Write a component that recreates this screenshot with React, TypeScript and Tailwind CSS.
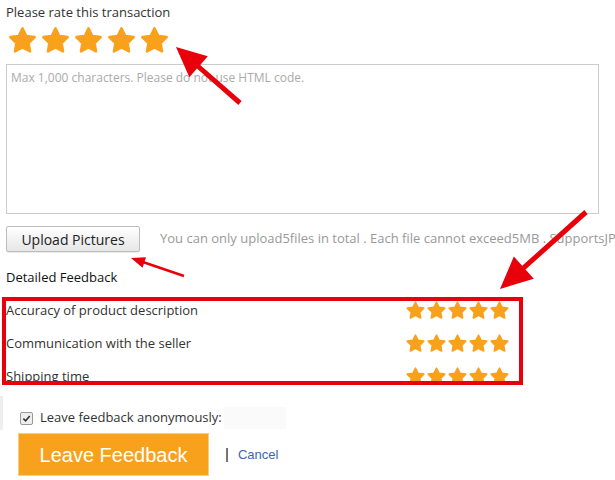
import React from 'react';

const STAR = '12,2.6 14.9,8.5 21.4,9.4 16.7,14 17.8,20.4 12,17.4 6.2,20.4 7.3,14 2.6,9.4 9.1,8.5';

function Star({ size }: { size: number }) {
  return (
    <svg width={size} height={size} viewBox="0 0 24 24" className="block shrink-0">
      <polygon points={STAR} fill="#f9a11b" stroke="#f9a11b" strokeWidth="2" strokeLinejoin="round" />
    </svg>
  );
}

function Stars({ size, gap }: { size: number; gap: string }) {
  return (
    <div className={`flex ${gap}`}>
      {[0, 1, 2, 3, 4].map((i) => (
        <Star key={i} size={size} />
      ))}
    </div>
  );
}

// arrow polygon from tail to tip
function arrow(tx: number, ty: number, hx: number, hy: number, shaft: number, headLen: number, headW: number) {
  const dx = hx - tx;
  const dy = hy - ty;
  const len = Math.hypot(dx, dy);
  const ux = dx / len;
  const uy = dy / len;
  const px = -uy;
  const py = ux;
  const bx = hx - ux * headLen;
  const by = hy - uy * headLen;
  const pts = [
    [tx + (px * shaft) / 2, ty + (py * shaft) / 2],
    [bx + (px * shaft) / 2, by + (py * shaft) / 2],
    [bx + (px * headW) / 2, by + (py * headW) / 2],
    [hx, hy],
    [bx - (px * headW) / 2, by - (py * headW) / 2],
    [bx - (px * shaft) / 2, by - (py * shaft) / 2],
    [tx - (px * shaft) / 2, ty - (py * shaft) / 2],
  ];
  return pts.map((p) => p.map((v) => v.toFixed(1)).join(',')).join(' ');
}

const rows = ['Accuracy of product description', 'Communication with the seller', 'Shipping time'];

export default function App() {
  return (
    <div className="relative h-[480px] w-[615px] overflow-hidden bg-white font-['Open_Sans',sans-serif] text-[#333]">
      <div className="px-[6px] pt-[4px]">
        <p className="text-[13px] leading-[17px]">Please rate this transaction</p>
        <div className="mt-[4px] pl-[1px]">
          <Stars size={31} gap="gap-[2px]" />
        </div>
        <textarea
          className="mt-[8px] block h-[150px] w-[593px] resize-none border border-[#ccc] px-[4px] py-[4px] text-[12px] outline-none placeholder:text-[#aaa]"
          placeholder="Max 1,000 characters. Please do not use HTML code."
        />
        <div className="mt-[12px] flex items-center">
          <button className="h-[26px] w-[134px] shrink-0 rounded-[2px] border border-[#bcbcbc] bg-gradient-to-b from-white to-[#e6e6e6] text-[14px] text-[#222] shadow-[0_1px_1px_rgba(0,0,0,0.08)]">
            Upload Pictures
          </button>
          <span className="ml-[20px] whitespace-nowrap text-[13px] text-[#999]">
            You can only upload5files in total . Each file cannot exceed5MB . SupportsJPG, JPEG, PNG format.
          </span>
        </div>
        <p className="mt-[16px] text-[13px] leading-[18px] text-[#111]">Detailed Feedback</p>
        <div className="mt-[15px] flex w-[504px] flex-col gap-[15px]">
          {rows.map((r) => (
            <div key={r} className="flex h-[18px] items-center justify-between">
              <span className="text-[13px] leading-[18px]">{r}</span>
              <Stars size={21} gap="gap-0" />
            </div>
          ))}
        </div>
        <div className="mt-[22px] flex items-center pl-[14px]">
          <span className="flex h-[13px] w-[13px] items-center justify-center rounded-[2px] border border-[#999] bg-[#eee]">
            <svg width="9" height="9" viewBox="0 0 10 10">
              <path d="M1.5 5.2 L4 7.6 L8.6 2.2" fill="none" stroke="#333" strokeWidth="1.8" />
            </svg>
          </span>
          <span className="ml-[7px] text-[13px]">Leave feedback anonymously:</span>
          <span className="ml-[2px] h-[22px] w-[62px] bg-[#fafafa]" />
        </div>
        <div className="mt-[4px] flex items-center pl-[12px]">
          <button className="h-[43px] w-[191px] border border-[#f6cf82] bg-[#f8a11c] font-['Liberation_Sans',Arial,sans-serif] text-[20px] text-white">
            Leave Feedback
          </button>
          <span className="ml-[16px] font-['Liberation_Sans',Arial,sans-serif] text-[15px] text-[#222]">|</span>
          <a className="ml-[9px] font-['Liberation_Sans',Arial,sans-serif] text-[13px] text-[#3a67b0]" href="#">
            Cancel
          </a>
        </div>
      </div>

      <div className="absolute left-0 top-[396px] h-[34px] w-[3px] bg-[#eee]" />

      {/* annotation overlay */}
      <div className="pointer-events-none absolute left-[2px] top-[297px] h-[88px] w-[521px] border-[4px] border-[#e8000b]" />
      <svg className="pointer-events-none absolute left-0 top-0" width="615" height="480">
        <polygon points={arrow(240, 103, 176, 47, 5, 30, 28)} fill="#e8000b" />
        <polygon points={arrow(184, 276, 131, 258, 2.5, 14, 11)} fill="#e8000b" />
        <polygon points={arrow(586, 212, 500, 289, 5, 32, 30)} fill="#e8000b" />
      </svg>
    </div>
  );
}
